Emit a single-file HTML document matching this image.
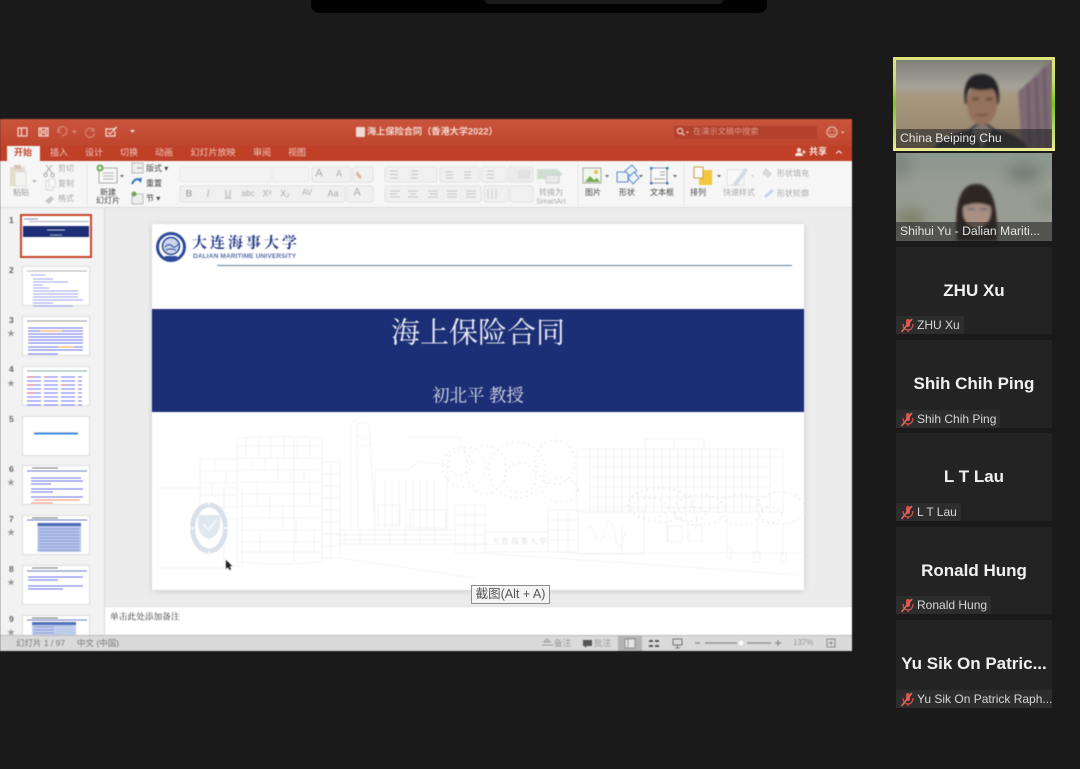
<!DOCTYPE html>
<html lang="zh"><head><meta charset="utf-8"><title>Zoom</title>
<style>
html,body{margin:0;padding:0;background:#1a1a1a;width:1080px;height:769px;overflow:hidden}
body{position:relative;font-family:"Liberation Sans","Noto Sans CJK SC",sans-serif}
div,span{position:absolute;box-sizing:border-box}
.t{white-space:nowrap;line-height:1;transform:translate(-50%,-50%);font-size:8.5px;color:#555}
.l{white-space:nowrap;line-height:1;transform:translateY(-50%);font-size:8.5px;color:#555}
.g{color:#aaa}
.tab{color:#f2c9bd;font-size:9px;top:153px}
.tile{left:896px;width:156px;background:#232323;overflow:hidden}
.big{left:0;right:0;text-align:center;font-weight:bold;color:#f0f0f0;font-size:17px;line-height:20px;white-space:nowrap}
.lab{left:0;bottom:0;height:18px;background:#2d2d2d;color:#d6d6d6;font-size:12px;line-height:18px;padding-left:21px;white-space:nowrap;padding-right:4px}
.lab svg{position:absolute;left:4px;top:2px}
.vlab{left:0;right:0;bottom:0;height:19px;background:rgba(40,40,40,.62);color:#e4e4e4;font-size:12.2px;line-height:19px;padding-left:4px;white-space:nowrap}
.th{left:22px;width:68px;height:40px;background:#fff;border:1px solid #dedede}
.n{left:9px;font-size:8.5px;font-weight:bold;color:#666;line-height:1}
.star{left:7px;font-size:8px;color:#999;line-height:1}
#ppt{left:0;top:0;width:1080px;height:769px;filter:blur(.45px)}
</style></head><body>

<!-- top bar -->
<div style="left:311px;top:0;width:456px;height:13px;background:#020202;border-radius:0 0 8px 8px"></div>
<div style="left:485px;top:0;width:238px;height:4px;background:#1b1b1b;border-radius:0 0 4px 4px"></div>

<div id="ppt">
<!-- PPT window -->
<div style="left:0;top:119px;width:852px;height:532px;background:#ececec;overflow:hidden">
  <div style="left:0;top:0;width:852px;height:28px;background:linear-gradient(#c9553c,#bf452d)"></div>
  <div style="left:0;top:27px;width:852px;height:15px;background:#bf3f27"></div>
  <div style="left:0;top:42px;width:852px;height:47px;background:#f6f6f6;border-bottom:1px solid #dcdcdc"></div>
  <div style="left:0;top:89px;width:105px;height:428px;background:#f2f2f2;border-right:1px solid #d8d8d8"></div>
  <div style="left:105px;top:487px;width:747px;height:30px;background:#fff;border-top:1px solid #ddd"></div>
  <div style="left:0;top:516px;width:852px;height:16px;background:#dadada;border-top:1px solid #bdbdbd"></div>
</div>

<!-- title bar icons -->
<svg style="position:absolute;left:0;top:119px" width="852" height="90" fill="none">
  <g stroke="#f5dcd5" stroke-width="1.2">
    <rect x="18" y="9" width="9" height="8"/><path d="M21.5 9v8"/>
    <rect x="39" y="9" width="9" height="8"/><path d="M41 9v3h5V9M41 17v-3h5v3"/>
    <path d="M106 10h8l3-2M106 9v8h9v-5" /><path d="M108 13l2 2 6-6"/>
    <path d="M130 11h5l-2.500 3z" fill="#f5dcd5" stroke="none"/>
  </g>
  <g stroke="#d88b78" stroke-width="1.1">
    <path d="M60 10l-2 3 3 1M58 13a4.500 4.500 0 1 1 4 3.500"/><path d="M73 12h3l-1.500 2z"/>
    <path d="M93 9l1 3-3 0M93.500 11a4.500 4.500 0 1 0 1 3"/>
  </g>
  <rect x="674" y="7" width="143" height="13" rx="2" fill="#b3412b"/>
  <circle cx="680" cy="12" r="2.700" stroke="#f3d4cb" stroke-width="1.100"/><path d="M682 14l2.500 2.500" stroke="#f3d4cb" stroke-width="1.200"/>
  <path d="M686 12.500h3l-1.500 2z" fill="#f3d4cb"/>
  <circle cx="832" cy="13" r="5" stroke="#f0c9be" stroke-width="1"/><circle cx="830" cy="12" r=".7" fill="#f0c9be"/><circle cx="834" cy="12" r=".7" fill="#f0c9be"/><path d="M829.500 14.500q2.500 2.500 5 0" stroke="#f0c9be" stroke-width=".8"/>
  <path d="M841 12.500h3.500l-1.750 2z" fill="#f0c9be"/>
  <circle cx="799" cy="31" r="2" fill="#f8e6e0"/><path d="M795 37q0-3.500 4-3.500t4 3.500z" fill="#f8e6e0"/><path d="M802 33h4M804 31v4" stroke="#f8e6e0"/>
  <path d="M836 34.500l3-2.500 3 2.500" stroke="#f8e6e0" stroke-width="1.100"/>
</svg>

<span class="l" style="left:356px;top:132px;width:9px;height:10px;background:#f2d9d2;border-radius:1px"></span>
<span class="l" style="left:367px;top:132px;font-size:9.200px;font-weight:bold;color:#f3d8d0">海上保险合同（香港大学2022）</span>
<span class="l" style="left:693px;top:132px;font-size:8.200px;color:#dd9c8c">在演示文稿中搜索</span>

<!-- tabs -->
<div style="left:7px;top:146px;width:33px;height:15px;background:#f6f6f6"></div>
<span class="t" style="left:23px;top:153px;font-size:9px;color:#c5442c;font-weight:bold">开始</span>
<span class="t tab" style="left:59px">插入</span>
<span class="t tab" style="left:94px">设计</span>
<span class="t tab" style="left:129px">切换</span>
<span class="t tab" style="left:164px">动画</span>
<span class="t tab" style="left:213px">幻灯片放映</span>
<span class="t tab" style="left:262px">审阅</span>
<span class="t tab" style="left:297px">视图</span>
<span class="t" style="left:818px;top:152px;color:#fbeae5;font-size:9px;font-weight:bold">共享</span>

<!-- ribbon shapes -->
<svg style="position:absolute;left:0;top:161px" width="852" height="47" fill="none">
  <rect x="10" y="6" width="15" height="19" rx="1" fill="#e5dccb"/><rect x="15" y="11" width="11" height="14" fill="#f4f4f2" stroke="#ddd"/>
  <rect x="14" y="4" width="7" height="4" fill="#cfc8ba"/>
  <path d="M32 21h5l-2.500 3z" transform="translate(0 -2)" fill="#bbb"/>
  <path d="M46 4l7 9M52 4l-7 9" stroke="#aaa"/><circle cx="45.500" cy="14" r="1.700" stroke="#aaa"/><circle cx="52.500" cy="14" r="1.700" stroke="#aaa"/>
  <rect x="46" y="20" width="7" height="9" stroke="#d6d6d6" fill="#f8f8f8"/><rect x="49" y="18" width="6" height="8" stroke="#ddd" fill="#fafafa"/>
  <path d="M45 40l6-5 3 3-5 5z" fill="#c7c7c7"/>
  <path d="M87 3v44" stroke="#e6e6e6" transform="translate(0 -1)"/>
  <rect x="99" y="7" width="18" height="15" fill="#f9f9f9" stroke="#aaa"/><path d="M103 12h11M103 15h11M103 18h11" stroke="#999" stroke-width=".8"/>
  <circle cx="100" cy="7" r="3.500" fill="#66a84f"/><path d="M98 7h4M100 5v4" stroke="#fff"/>
  <path d="M120 14h4l-2 2.500z" fill="#666"/>
  <rect x="132" y="2" width="11" height="10" fill="#eee" stroke="#bbb"/><path d="M137 7h5" stroke="#999"/>
  <path d="M132 23q3-7 9-4" stroke="#2f6fc0" stroke-width="2"/><path d="M142 16l-1 6-3-3z" fill="#2f6fc0"/>
  <rect x="132" y="33" width="11" height="10" fill="#eee" stroke="#bbb"/><circle cx="134" cy="33" r="2.500" fill="#66a84f"/>
  <rect x="180" y="6" width="91" height="15" rx="2" fill="#f3f3f3" stroke="#e8e8e8"/>
  <rect x="273" y="6" width="36" height="15" rx="2" fill="#f3f3f3" stroke="#e8e8e8"/>
  <rect x="312" y="6" width="39" height="15" rx="2" fill="#f0f0f0" stroke="#e0e0e0"/>
  <rect x="353" y="6" width="20" height="15" rx="2" fill="#f0f0f0" stroke="#e0e0e0"/>
  <rect x="180" y="25" width="165" height="16" rx="2" fill="#f0f0f0" stroke="#e2e2e2"/>
  <rect x="347" y="25" width="26" height="16" rx="2" fill="#f0f0f0" stroke="#e2e2e2"/>
  <path d="M357 10l5 6-2 2-4-4z" fill="#dfb3ad"/>
  <rect x="385" y="6" width="52" height="15" rx="2" fill="#f0f0f0" stroke="#e2e2e2"/>
  <rect x="440" y="6" width="39" height="15" rx="2" fill="#f0f0f0" stroke="#e2e2e2"/>
  <rect x="481" y="6" width="25" height="15" rx="2" fill="#f0f0f0" stroke="#e2e2e2"/>
  <rect x="508" y="6" width="25" height="15" rx="2" fill="#ececec" stroke="#e2e2e2"/>
  <rect x="385" y="25" width="96" height="16" rx="2" fill="#f0f0f0" stroke="#e2e2e2"/>
  <rect x="484" y="25" width="24" height="16" rx="2" fill="#f0f0f0" stroke="#e2e2e2"/>
  <rect x="510" y="25" width="23" height="16" rx="2" fill="#f0f0f0" stroke="#e2e2e2"/>
  <g stroke="#c4c4c4" stroke-width=".9">
    <path d="M390 10h8M390 13.500h8M390 17h8M411 10h7M411 13.500h7M411 17h7M446 11h7M446 14h7M446 17h7M464 11h7M464 14h7M464 17h7M487 10h7M487 13.500h7M487 17h7"/>
    <path d="M390 30h10M390 33h7M390 36h10M408 30h10M410 33h6M408 36h10M428 30h10M430 33h8M428 36h10M447 30h10M447 33h10M447 36h10M466 30h10M466 33h10M466 36h10"/>
  </g>
  <path d="M518 9h12v9h-12z" fill="#e2e2e2"/>
  <path d="M488 28v10M492 28v10M496 28v10" stroke="#ccc"/>
  <path d="M537 8h20l6 5-6 5h-20z" fill="#cfe0d2"/><rect x="546" y="14" width="13" height="8" fill="#e9e9e9" stroke="#ccc"/>
  <path d="M578 2v43" stroke="#e6e6e6"/>
  <rect x="583" y="7" width="18" height="15" fill="#f0f6ea" stroke="#aaa"/><path d="M585 21l5-6 4 4 3-2 3 4z" fill="#77ad52"/><circle cx="596" cy="11" r="2" fill="#e9c04f"/>
  <path d="M605 14h4l-2 2.500z" fill="#666"/>
  <rect x="617" y="11" width="11" height="10" fill="#edf3fa" stroke="#5f8cc3"/><path d="M625 10l7-6 5 6-7 5z" fill="#edf3fa" stroke="#5f8cc3"/><path d="M628 17l6-6 5 6-6 6z" fill="#edf3fa" stroke="#5f8cc3"/>
  <path d="M639 14h4l-2 2.500z" fill="#666"/>
  <rect x="651" y="7" width="16" height="15" fill="#fafafa" stroke="#999"/><path d="M660 11h5M660 14h5M654 18h11" stroke="#888" stroke-width=".8"/>
  <g fill="#3e7cc6"><rect x="650" y="6" width="2.500" height="2.500"/><rect x="666" y="6" width="2.500" height="2.500"/><rect x="650" y="21" width="2.500" height="2.500"/><rect x="666" y="21" width="2.500" height="2.500"/></g>
  <path d="M673 14h4l-2 2.500z" fill="#666"/>
  <path d="M684 2v43" stroke="#e6e6e6"/>
  <rect x="699" y="9" width="13" height="15" fill="#f3c73f"/><rect x="694" y="6" width="9" height="11" fill="#f8f8f8" stroke="#c6a345"/>
  <path d="M717 14h4l-2 2.500z" fill="#666"/>
  <rect x="727" y="9" width="17" height="15" fill="#f9f9f9" stroke="#e0e0e0"/><path d="M732 24l13-17 3 2-11 16z" fill="#d4dbe6"/>
  <path d="M751 14h3l-1.500 2z" fill="#ccc"/>
  <path d="M766 8l5 5-3 3-5-4z" fill="#ddd" stroke="#ccc"/>
  <path d="M764 35l8-7 2 2-8 7z" fill="#c8d3e4"/>
</svg>

<span class="t" style="left:21px;top:193px;color:#999;font-size:8px">粘贴</span>
<span class="l g" style="left:58px;top:169px;font-size:8px">剪切</span>
<span class="l g" style="left:58px;top:184px;font-size:8px">复制</span>
<span class="l g" style="left:58px;top:199px;font-size:8px">格式</span>
<span class="t" style="left:108px;top:193px;font-size:8px;color:#444">新建</span>
<span class="t" style="left:108px;top:201px;font-size:8px;color:#444">幻灯片</span>
<span class="l" style="left:146px;top:169px;font-size:8px;color:#444">版式 ▾</span>
<span class="l" style="left:146px;top:184px;font-size:8px;color:#444">重置</span>
<span class="l" style="left:146px;top:199px;font-size:8px;color:#444">节 ▾</span>

<span class="t g" style="left:319px;top:174px;font-size:11px">A</span>
<span class="t g" style="left:339px;top:174px;font-size:9px">A</span>
<span class="t g" style="left:189px;top:194px;font-size:9px;font-weight:bold">B</span>
<span class="t g" style="left:208px;top:194px;font-size:9px;font-style:italic;font-family:'Liberation Serif',serif">I</span>
<span class="t g" style="left:228px;top:194px;font-size:9px;text-decoration:underline">U</span>
<span class="t g" style="left:248px;top:194px;font-size:8px">abc</span>
<span class="t g" style="left:267px;top:194px;font-size:9px">X²</span>
<span class="t g" style="left:285px;top:194px;font-size:9px">X₂</span>
<span class="t g" style="left:307px;top:193px;font-size:8px">AV</span>
<span class="t g" style="left:333px;top:194px;font-size:9px">Aa</span>
<span class="t g" style="left:357px;top:193px;font-size:11px">A</span>

<span class="t g" style="left:551px;top:193px;font-size:8px">转换为</span>
<span class="t g" style="left:551px;top:201px;font-size:7.500px">SmartArt</span>
<span class="t" style="left:593px;top:193px;font-size:8px;color:#444">图片</span>
<span class="t" style="left:627px;top:193px;font-size:8px;color:#444">形状</span>
<span class="t" style="left:662px;top:193px;font-size:8px;color:#444">文本框</span>
<span class="t" style="left:698px;top:193px;font-size:8px;color:#444">排列</span>
<span class="t g" style="left:739px;top:193px;font-size:8px">快速样式</span>
<span class="l g" style="left:777px;top:174px;font-size:8px">形状填充</span>
<span class="l g" style="left:777px;top:194px;font-size:8px">形状轮廓</span>

<!-- thumbnails -->
<span class="n" style="top:216px">1</span>
<span class="n" style="top:266px">2</span>
<span class="n" style="top:316px">3</span><span class="star" style="top:330px">★</span>
<span class="n" style="top:365px">4</span><span class="star" style="top:380px">★</span>
<span class="n" style="top:415px">5</span>
<span class="n" style="top:465px">6</span><span class="star" style="top:479px">★</span>
<span class="n" style="top:515px">7</span><span class="star" style="top:529px">★</span>
<span class="n" style="top:565px">8</span><span class="star" style="top:579px">★</span>
<span class="n" style="top:615px">9</span><span class="star" style="top:629px">★</span>

<div class="th" style="left:20px;top:214px;width:72px;height:44px;border:2px solid #c8452d"></div>
<div class="th" style="top:266px"></div>
<div class="th" style="top:316px"></div>
<div class="th" style="top:366px"></div>
<div class="th" style="top:416px"></div>
<div class="th" style="top:465px"></div>
<div class="th" style="top:515px"></div>
<div class="th" style="top:565px"></div>
<div class="th" style="top:615px;height:20px;border-bottom:0"></div>

<svg style="position:absolute;left:0;top:210px" width="104" height="425" fill="none" stroke-width="1">
  <!-- 1 -->
  <rect x="23" y="16" width="66" height="11" fill="#1c2f76"/><path d="M47 20h18" stroke="#c8cde0"/><path d="M50 25h12" stroke="#aab"/>
  <path d="M29 11.500h60" stroke="#8a93a8" stroke-width=".7"/><path d="M24 9h14" stroke="#7c86b4"/>
  <!-- 2 -->
  <g stroke="#7f86e6" stroke-width=".8"><path d="M27 61h60" stroke="#999"/><path d="M31 65h14M33 69h20M33 72h35M33 75h10M33 78h16M33 81h45M33 84h45M33 87h45M33 90h50M33 93h20M33 96h40"/></g>
  <!-- 3 -->
  <g stroke="#6a70ee" stroke-width=".9"><path d="M27 111h60" stroke="#999"/><path d="M28 118h55M28 121h55M28 124h55M28 127h55M28 130h55M28 133h55M28 137h55M28 140h55M28 144h30"/></g><path d="M40 121h22M58 137h16" stroke="#efa24a" stroke-width=".9"/>
  <!-- 4 -->
  <g stroke-width=".9" stroke-dasharray="14 3"><path d="M27 167h55M27 171h55M27 175h55M27 179h55M27 183h55M27 187h55M27 191h55M27 195h55" stroke="#6f75ea"/></g><path d="M29 167h4M29 175h4M29 183h4M45 167h3M62 175h3" stroke="#e0604f"/>
  <path d="M27 161h60" stroke="#8a9"/>
  <!-- 5 -->
  <path d="M34 223.500h44" stroke="#3f88d8" stroke-width="2"/>
  <!-- 6 -->
  <path d="M27 261h60" stroke="#6e7ac4"/><path d="M32 258h26" stroke="#777"/>
  <g stroke="#6a70ee" stroke-width=".9"><path d="M31 268h50M31 271h52M31 274h20M31 279h52M31 282h22M31 287h52"/></g><path d="M34 290h46M31 293h22" stroke="#ef8a6e"/>
  <!-- 7 -->
  <path d="M27 310h60" stroke="#6e7ac4"/><path d="M32 308h26" stroke="#777"/>
  <rect x="37.500" y="313" width="43.500" height="29" fill="#b9c6ea"/><rect x="37.500" y="313" width="43.500" height="3" fill="#4a6bb5"/>
  <g stroke="#7d8ccf" stroke-width=".7"><path d="M39 319h40M39 322h40M39 325h40M39 328h40M39 331h40M39 334h40M39 337h40M39 340h40"/></g>
  <!-- 8 -->
  <path d="M27 361h60" stroke="#6e7ac4"/><path d="M32 358h26" stroke="#777"/>
  <g stroke="#6a70ee" stroke-width=".9"><path d="M28 367h55M28 370h30M28 376h55M28 379h35"/></g>
  <!-- 9 -->
  <path d="M27 410h60" stroke="#6e7ac4"/><path d="M32 408h26" stroke="#777"/>
  <rect x="32" y="412" width="44" height="13" fill="#bfcdec"/><rect x="32" y="412" width="44" height="3" fill="#5373b8"/>
  <g stroke="#7d8ccf" stroke-width=".7"><path d="M34 417h20M34 420h20M34 423h20"/></g>
</svg>

<!-- slide -->
<div style="left:152px;top:224px;width:652px;height:366px;background:#fff;box-shadow:0 1px 6px rgba(0,0,0,.14)"></div>
<div style="left:152px;top:309px;width:652px;height:103px;background:#1c2f76"></div>
<span class="t" style="left:478px;top:334px;font-size:29px;color:#e9ebf2;font-family:'Liberation Serif','Noto Serif CJK SC',serif">海上保险合同</span>
<span class="t" style="left:478px;top:396px;font-size:17.500px;color:#dcdfea;font-family:'Liberation Serif','Noto Serif CJK SC',serif">初北平 教授</span>
<span class="l" style="left:192px;top:242px;font-size:15px;letter-spacing:3px;font-weight:bold;color:#24398a;font-family:'Noto Serif CJK SC',serif">大连海事大学</span>
<span class="l" style="left:193px;top:257px;font-size:6.500px;font-weight:bold;letter-spacing:.15px;color:#5a6fa8">DALIAN MARITIME UNIVERSITY</span>

<svg style="position:absolute;left:0;top:0" width="1080" height="769" fill="none">
  <path d="M217 265.500H792" stroke="#5f7d8e" stroke-width="1"/>
  <!-- logo seal -->
  <circle cx="171" cy="247" r="13.500" stroke="#2c4a9a" stroke-width="3"/>
  <circle cx="171" cy="246" r="8.500" fill="#cdd6ea" stroke="#2c4a9a" stroke-width="1.500"/>
  <path d="M165 247q4-4 7-1t6-2M166 250q4-2 10 0" stroke="#2c4a9a"/>
  <rect x="165" y="256" width="12" height="3.500" fill="#2c4a9a"/>

  <g stroke="#f1f1f1" stroke-width=".8">
    <!-- left block -->
    <path d="M158 488h66v80h-66zM224 488h18v78h-18" />
    <!-- big brick building -->
    <path d="M237 438q45-3 85 0v124q-40 4-85 0zM200 459h37v60h-37z"/>
    <path d="M237 446h85M237 458h85M237 470h85M241 482h81M242 494h80M242 506h80M242 518h80M242 530h80M242 542h80M242 552h80"/>
    <path d="M246 438v20M259 438v20M271 438v20M284 438v20M297 438v20M310 438v20M252 458v12M265 458v12M278 458v24M291 470v12M304 470v12M257 482v24M270 494v24M283 506v24M296 518v24M260 530v22M310 482v24M314 530v22M294 438v124"/>
    <path d="M200 471h37M200 483h37M200 495h37M200 507h37M215 459v12M226 471v12M212 483v12M224 495v12"/>
    <path d="M322 462h18v96h-18zM322 474h18M322 486h18M322 498h18M322 510h18M322 522h18M322 534h18M322 546h18M331 462v96"/>
    <!-- tower -->
    <path d="M351 528V425q3-8 6-3l1 106M357 425q6-6 12 0l6 100v3"/>
    <path d="M358 435q6 8 14 0M360 445q6 4 12-2"/>
    <!-- mid building -->
    <path d="M375 470h34l8-8 30 2v66H375zM409 437h50l10 28"/>
    <path d="M385 480v48M392 480v48M399 480v48M406 480v48M413 480v48M420 480v48M427 480v48M434 480v48"/>
    <path d="M378 505h22v20h-22zM410 510h36v18h-36z"/>
    <!-- platform -->
    <path d="M338 530h115M338 535h115M338 540h115M338 544h115M345 530v14M360 530v14M375 530v14M390 530v14M405 530v14M420 530v14M435 530v14"/>
    <path d="M340 558l135 20M340 544h150"/>
    <!-- wall bricks right of mid -->
    <path d="M455 505h30v48h-30zM455 515h30M455 525h30M455 535h30M455 545h30M465 505v48M475 505v48"/>
    <!-- main building -->
    <path d="M577 449h206v63H577zM645 439h59v10h-59zM674 439v10"/>
    <path d="M577 457h206M590 467h180M590 477h180M590 487h180M590 497h180M590 507h180M590 449v63M770 449v63"/>
    <path d="M598 449v63M606 449v63M614 449v63M622 449v63M630 449v63M638 449v63M646 449v63M654 449v63M662 449v63M670 449v63M678 449v63M686 449v63M694 449v63M702 449v63M710 449v63M718 449v63M726 449v63M734 449v63M742 449v63M750 449v63M758 449v63"/>
    <!-- gate -->
    <path d="M485 532h63v20h-63zM548 510h30v42h-30zM548 520h30M548 530h30M548 540h30M558 510v42M568 510v42M578 510h66v44h-66"/>
    <path d="M585 530q5-10 10 5t10-5 10 5 10-4" />
    <path d="M480 553l323 22M560 553h243"/>
    <!-- trunks & posts -->
    <path d="M667 542v-28M695 530q5-14-3-24M727 558v-45M757 552v-34M783 556v-30M622 552v-28" />
    <path d="M668 542h14v-16h-14zM688 541h14v-16h-14zM727 548h4v10h-4zM754 552h6v10h-6zM781 553h5v10h-5z"/>
  </g>
  <!-- foliage -->
  <g stroke="#e6e6e6" stroke-width="1.300" stroke-dasharray="1.500 4">
    <ellipse cx="464" cy="467" rx="22" ry="20"/><ellipse cx="460" cy="463" rx="12" ry="12"/>
    <ellipse cx="486" cy="470" rx="20" ry="24"/>
    <ellipse cx="517" cy="470" rx="28" ry="28"/><ellipse cx="520" cy="478" rx="16" ry="15"/>
    <ellipse cx="555" cy="462" rx="20" ry="22"/><ellipse cx="560" cy="490" rx="18" ry="12"/>
    <ellipse cx="660" cy="505" rx="32" ry="17"/><ellipse cx="700" cy="510" rx="26" ry="15"/>
    <ellipse cx="650" cy="508" rx="18" ry="10"/><ellipse cx="740" cy="510" rx="22" ry="15"/>
    <ellipse cx="780" cy="508" rx="24" ry="16"/><ellipse cx="770" cy="515" rx="12" ry="8"/>
    <ellipse cx="690" cy="514" rx="16" ry="7"/>
  </g>
  <!-- gate text -->
  <!-- faded seal -->
  <ellipse cx="209" cy="528" rx="16.500" ry="23" stroke="#d8e1e9" stroke-width="5"/>
  <path d="M198 515h22v12q-3 10-11 12-8-2-11-12z" fill="#e0e8ef"/>
  <path d="M203 524l6 6 7-10" stroke="#f5f8fa" stroke-width="2"/>
  <path d="M209 500v5M209 551v5M190 528h4M224 528h4" stroke="#fff" stroke-width="1.500"/>
  <!-- cursor -->
  <path d="M226 560l0 9 2-2 1.500 3 1.500-.8-1.500-3 2.500-.2z" fill="#1a1a1a" stroke="#555" stroke-width=".4"/>
  <!-- status icons -->
  <path d="M542 645h11M544 642h7M547 639l3 3h-6z" stroke="#999" stroke-width="1"/>
  <path d="M583 640h9v6h-5l-2 2v-2h-2z" fill="#555"/>
  <rect x="618" y="636" width="24" height="15" fill="#b4b4b4"/>
  <rect x="625" y="639" width="10" height="9" fill="#e6e6e6" stroke="#777" stroke-width=".7"/><path d="M628 639v9" stroke="#777" stroke-width=".7"/>
  <path d="M649 640h4v2h-4zM655 640h4v2h-4zM649 645h4v2h-4zM655 645h4v2h-4z" fill="#555"/>
  <rect x="673" y="639" width="9" height="6" stroke="#777"/><path d="M677.500 645v3M675 648h5" stroke="#777"/>
  <path d="M695 643h5M705 643h32M747 643h24M775 643h6M778 640v6" stroke="#8a8a8a" stroke-width="1.200"/>
  <circle cx="741" cy="643" r="3" fill="#fafafa" stroke="#ccc" stroke-width=".6"/>
  <rect x="827" y="639" width="8" height="8" stroke="#888"/><path d="M829 643h4M831 641v4" stroke="#888"/>
</svg>
<span class="l" style="left:492px;top:541px;font-size:7.500px;letter-spacing:2px;color:#ddd;font-family:'Noto Serif CJK SC',serif">大连海事大学</span>

<span class="l" style="left:110px;top:617px;font-size:8.700px;color:#333;font-family:'Noto Serif CJK SC',serif">单击此处添加备注</span>
<span class="l" style="left:16px;top:643px;font-size:8.500px;color:#777">幻灯片 1 / 97</span>
<span class="l" style="left:77px;top:643px;font-size:8.500px;color:#777">中文 (中国)</span>
<span class="l" style="left:554px;top:643px;font-size:8.500px;color:#999">备注</span>
<span class="l" style="left:594px;top:643px;font-size:8.500px;color:#999">批注</span>
<span class="l" style="left:793px;top:643px;font-size:8px;color:#999">137%</span>
</div>

<div style="left:471px;top:585px;width:79px;height:19px;background:#f4f4f4;border:1px solid #8e8e8e;color:#555;font-size:12.500px;line-height:17px;text-align:center;white-space:nowrap">截图(Alt + A)</div>

<!-- video tiles -->
<div style="left:893px;top:57px;width:162px;height:94px;background:linear-gradient(#dfe57c 0,#c5e070 25%,#7cc61c 50%,#b5d968 75%,#eeee90 100%)"></div>
<div class="tile" style="top:60px;height:88px">
  <svg width="156" height="88" style="position:absolute;left:0;top:0">
    <defs><filter id="b1" x="-10%" y="-10%" width="120%" height="120%"><feGaussianBlur stdDeviation="1.200"/></filter><filter id="b2" x="-30%" y="-30%" width="160%" height="160%"><feGaussianBlur stdDeviation="7"/></filter><filter id="b3"><feGaussianBlur stdDeviation="1.200"/></filter>
    <linearGradient id="w1" x1="0" y1="0" x2="0" y2="1"><stop offset="0" stop-color="#80807a"/><stop offset=".3" stop-color="#a5a399"/><stop offset=".42" stop-color="#a8987f"/><stop offset="1" stop-color="#94836b"/></linearGradient></defs>
    <rect width="156" height="88" fill="url(#w1)"/>
    <g filter="url(#b1)">
      <path d="M122 32L156 0V88H126z" fill="#7d6a73"/>
      <path d="M132 24l2 64M140 18l3 70M148 8l3 80" stroke="#65535e" stroke-width="2"/>
      <path d="M38 88q8-12 34-18l8-6h12l8 6q24 4 32 18z" fill="#333236"/>
      <path d="M76 70l10 18 10-18-6-5H82z" fill="#7d7772"/>
      <ellipse cx="86" cy="44" rx="15" ry="21" fill="#94715c"/>
      <path d="M69 44q-4-30 17-30 19 1 17 28l-2 4q0-14-5-17-12 3-22-1-4 6-3 16z" fill="#232325"/>
      <path d="M76 39h7M90 39h7" stroke="#2f2522" stroke-width="1.500"/>
      <path d="M80 55h12" stroke="#5f4538" stroke-width="1.500"/>
    </g>
  </svg>
  <div class="vlab">China Beiping Chu</div>
</div>
<div class="tile" style="top:153px;height:88px">
  <svg width="156" height="88" style="position:absolute;left:0;top:0">
    <rect width="156" height="88" fill="#999c92"/>
    <g filter="url(#b2)">
      <rect x="-20" y="-20" width="196" height="40" fill="#8d9890"/>
      <ellipse cx="128" cy="20" rx="18" ry="9" fill="#6d7a72"/>
      <ellipse cx="150" cy="50" rx="7" ry="10" fill="#7e877c"/>
      <ellipse cx="14" cy="66" rx="16" ry="10" fill="#7d8068"/>
      <ellipse cx="4" cy="12" rx="10" ry="14" fill="#77827c"/>
    </g>
    <g filter="url(#b3)">
      <path d="M61 88q-5-58 20-57 22 0 20 57z" fill="#2e2523"/>
      <ellipse cx="81" cy="58" rx="14" ry="17" fill="#a98f82"/>
      <path d="M66 54q3-14 15-14 12 0 15 14-15-7-30 0z" fill="#2e2523"/>
      <path d="M71 56h8M84 56h8" stroke="#4b4f66" stroke-width="1.500"/>
    </g>
  </svg>
  <div class="vlab">Shihui Yu - Dalian Mariti...</div>
</div>

<!-- name tiles -->
<div class="tile" style="top:247px;height:87px"><div class="big" style="top:34px">ZHU Xu</div><div class="lab">
  <svg width="14" height="15" fill="none"><rect x="6" y="1" width="4" height="8" rx="2" fill="#d9504b"/><path d="M3 6q.5 6 5 6t5-6M8 12v2" stroke="#d9504b" stroke-width="1.200"/><path d="M1.500 14L12 1" stroke="#e8625c" stroke-width="1.600"/></svg>ZHU Xu</div></div>
<div class="tile" style="top:340px;height:88px"><div class="big" style="top:34px">Shih Chih Ping</div><div class="lab">
  <svg width="14" height="15" fill="none"><rect x="6" y="1" width="4" height="8" rx="2" fill="#d9504b"/><path d="M3 6q.5 6 5 6t5-6M8 12v2" stroke="#d9504b" stroke-width="1.200"/><path d="M1.500 14L12 1" stroke="#e8625c" stroke-width="1.600"/></svg>Shih Chih Ping</div></div>
<div class="tile" style="top:433px;height:88px"><div class="big" style="top:34px">L T Lau</div><div class="lab">
  <svg width="14" height="15" fill="none"><rect x="6" y="1" width="4" height="8" rx="2" fill="#d9504b"/><path d="M3 6q.5 6 5 6t5-6M8 12v2" stroke="#d9504b" stroke-width="1.200"/><path d="M1.500 14L12 1" stroke="#e8625c" stroke-width="1.600"/></svg>L T Lau</div></div>
<div class="tile" style="top:527px;height:87px"><div class="big" style="top:34px">Ronald Hung</div><div class="lab">
  <svg width="14" height="15" fill="none"><rect x="6" y="1" width="4" height="8" rx="2" fill="#d9504b"/><path d="M3 6q.5 6 5 6t5-6M8 12v2" stroke="#d9504b" stroke-width="1.200"/><path d="M1.500 14L12 1" stroke="#e8625c" stroke-width="1.600"/></svg>Ronald Hung</div></div>
<div class="tile" style="top:620px;height:88px"><div class="big" style="top:34px">Yu Sik On Patric...</div><div class="lab" style="padding-right:2px">
  <svg width="14" height="15" fill="none"><rect x="6" y="1" width="4" height="8" rx="2" fill="#d9504b"/><path d="M3 6q.5 6 5 6t5-6M8 12v2" stroke="#d9504b" stroke-width="1.200"/><path d="M1.500 14L12 1" stroke="#e8625c" stroke-width="1.600"/></svg>Yu Sik On Patrick Raph...</div></div>

</body></html>
